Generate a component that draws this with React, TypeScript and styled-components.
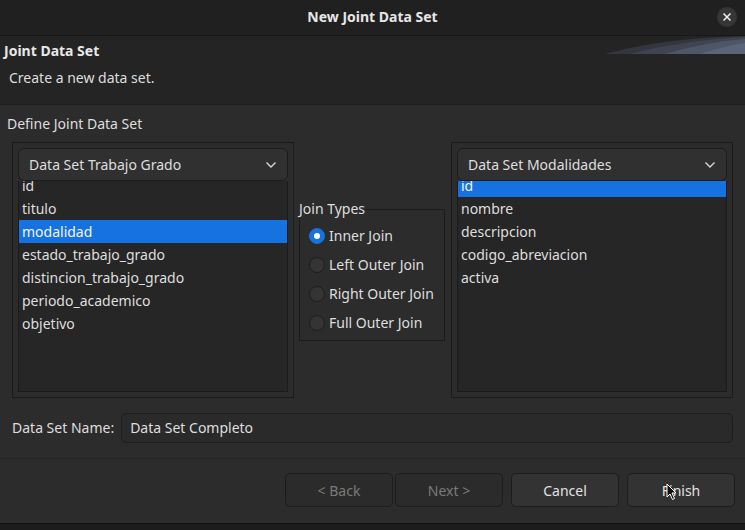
import React from 'react';
import styled, { createGlobalStyle } from 'styled-components';

const Global = createGlobalStyle`
  html, body { margin: 0; padding: 0; background: #2c2c2c; }
  body { font-family: "Noto Sans", "Open Sans", sans-serif; color: #dedede; font-size: 14px; }
  * { box-sizing: border-box; }
`;

const Window = styled.div`
  width: 745px;
  height: 530px;
  display: flex;
  flex-direction: column;
  background: #2c2c2c;
  overflow: hidden;
  position: relative;
`;

const TitleBar = styled.div`
  height: 36px;
  flex: none;
  background: #202020;
  border-bottom: 1px solid #171717;
  display: grid;
  grid-template-columns: 1fr auto 1fr;
  align-items: center;
  padding-bottom: 2px;
`;

const Title = styled.div`
  font-weight: 700;
  font-size: 14px;
  color: #e6e6e6;
`;

const CloseButton = styled.div`
  justify-self: end;
  margin-right: 8px;
  width: 20px;
  height: 20px;
  border-radius: 50%;
  background: #363636;
  display: flex;
  align-items: center;
  justify-content: center;
`;

const Header = styled.div`
  height: 69px;
  flex: none;
  background: #242424;
  border-bottom: 1px solid #1e1e1e;
  display: flex;
  justify-content: space-between;
`;

const HeaderText = styled.div`
  display: flex;
  flex-direction: column;
  padding: 5px 0 0 4px;
`;

const HeaderTitle = styled.div`
  font-weight: 700;
  font-size: 14px;
  line-height: 20px;
  color: #e8e8e8;
`;

const HeaderSub = styled.div`
  margin-top: 7px;
  padding-left: 5px;
  line-height: 20px;
`;

const Banner = styled.svg`
  width: 140px;
  height: 18px;
  display: block;
`;

const Content = styled.div`
  height: 353px;
  flex: none;
  display: flex;
  flex-direction: column;
`;

const SectionLabel = styled.div`
  padding: 9px 0 0 7px;
  line-height: 20px;
`;

const GroupsRow = styled.div`
  margin: 8px 0 0 12px;
  display: grid;
  grid-template-columns: 282px 157px 282px;
  height: 256px;
`;

const DataGroup = styled.div`
  border: 1px solid #1b1b1b;
  padding: 5px;
  display: flex;
  flex-direction: column;
`;

const Combo = styled.div`
  height: 33px;
  flex: none;
  border: 1px solid #1c1c1c;
  border-radius: 6px;
  background: #303030;
  display: flex;
  align-items: center;
  justify-content: space-between;
  padding: 0 10px 0 10px;
  position: relative;
  z-index: 1;
`;

const ListBox = styled.div`
  flex: 1;
  border: 1px solid #1b1b1b;
  border-top: none;
  background: #262626;
  overflow: hidden;
`;

const ListInner = styled.div`
  margin-top: -7px;
  display: flex;
  flex-direction: column;
`;

const Row = styled.div<{ $selected?: boolean }>`
  height: 23px;
  line-height: 23px;
  padding-left: 3px;
  background: ${(p) => (p.$selected ? '#1672e1' : 'transparent')};
  color: ${(p) => (p.$selected ? '#f4f4f4' : '#dedede')};
`;

const Middle = styled.div`
  display: flex;
  flex-direction: column;
  padding: 0 6px 0 5px;
`;

const JoinFieldset = styled.fieldset`
  margin: 59px 0 0 0;
  border: 1px solid #1b1b1b;
  padding: 4px 0 3px 9px;
  min-width: 0;
`;

const Legend = styled.legend`
  padding: 0;
  margin-left: -10px;
  line-height: 16px;
`;

const RadioRow = styled.div`
  height: 29px;
  display: flex;
  align-items: center;
  gap: 4px;
`;

const RadioCircle = styled.div<{ $checked?: boolean }>`
  width: 16px;
  height: 16px;
  border-radius: 50%;
  border: 1px solid ${(p) => (p.$checked ? '#1672e1' : '#1e1e1e')};
  background: ${(p) => (p.$checked ? '#1672e1' : '#343434')};
  display: flex;
  align-items: center;
  justify-content: center;
  &::after {
    content: '';
    width: 6px;
    height: 6px;
    border-radius: 50%;
    background: #ffffff;
    display: ${(p) => (p.$checked ? 'block' : 'none')};
  }
`;

const NameRow = styled.div`
  margin-top: 15px;
  display: flex;
  align-items: center;
  padding: 0 12px 0 12px;
  gap: 7px;
`;

const NameInput = styled.div`
  flex: 1;
  height: 30px;
  border: 1px solid #1d1d1d;
  border-radius: 5px;
  background: #2a2a2a;
  display: flex;
  align-items: center;
  padding: 0 0 2px 8px;
`;

const NameLabel = styled.span`
  padding-bottom: 2px;
`;

const ButtonBar = styled.div`
  height: 65px;
  flex: none;
  border-top: 1px solid #262626;
  display: flex;
  justify-content: flex-end;
  align-items: flex-start;
  padding: 14px 10px 0 0;
  gap: 8px;
`;

const NavPair = styled.div`
  display: flex;
  gap: 2px;
`;

const Button = styled.div<{ $disabled?: boolean }>`
  width: 108px;
  height: 34px;
  border-radius: 5px;
  border: 1px solid #1d1d1d;
  background: ${(p) => (p.$disabled ? '#2b2b2b' : '#333333')};
  color: ${(p) => (p.$disabled ? '#7a7a7a' : '#e2e2e2')};
  display: flex;
  align-items: center;
  justify-content: center;
  position: relative;
`;

const Cursor = styled.svg`
  position: absolute;
  left: 38px;
  top: 9px;
  width: 12px;
  height: 18px;
`;

const BottomStrip = styled.div`
  flex: 1;
  background: #1c1c1c;
  border-top: 1px solid #111;
`;

const Chevron = () => (
  <svg width="12" height="8" viewBox="0 0 12 8">
    <path d="M1.5 1.5 L6 6 L10.5 1.5" stroke="#d8d8d8" strokeWidth="1.4" fill="none" />
  </svg>
);

const DataSetPanel = ({ name, fields, selected }: { name: string; fields: string[]; selected: number }) => (
  <DataGroup>
    <Combo>
      <span>{name}</span>
      <Chevron />
    </Combo>
    <ListBox>
      <ListInner>
        {fields.map((f, i) => (
          <Row key={f} $selected={i === selected}>{f}</Row>
        ))}
      </ListInner>
    </ListBox>
  </DataGroup>
);

export default function App() {
  const joins = ['Inner Join', 'Left Outer Join', 'Right Outer Join', 'Full Outer Join'];
  return (
    <Window>
      <Global />
      <TitleBar>
        <span />
        <Title>New Joint Data Set</Title>
        <CloseButton>
          <svg width="10" height="10" viewBox="0 0 10 10">
            <path d="M1.5 1.5 L8.5 8.5 M8.5 1.5 L1.5 8.5" stroke="#f0f0f0" strokeWidth="1.5" />
          </svg>
        </CloseButton>
      </TitleBar>
      <Header>
        <HeaderText>
          <HeaderTitle>Joint Data Set</HeaderTitle>
          <HeaderSub>Create a new data set.</HeaderSub>
        </HeaderText>
        <Banner viewBox="0 0 140 18">
          <path d="M0 18 C30 10 70 2 140 0 L140 18 Z" fill="#33363c" />
          <path d="M25 18 C50 11 90 4 140 1 L140 18 Z" fill="#3f4450" />
          <path d="M60 18 C80 12 105 6 140 3 L140 18 Z" fill="#4e5669" />
          <path d="M95 18 C110 13 125 9 140 7 L140 18 Z" fill="#5b6579" />
        </Banner>
      </Header>
      <Content>
        <SectionLabel>Define Joint Data Set</SectionLabel>
        <GroupsRow>
          <DataSetPanel
            name="Data Set Trabajo Grado"
            fields={['id', 'titulo', 'modalidad', 'estado_trabajo_grado', 'distincion_trabajo_grado', 'periodo_academico', 'objetivo']}
            selected={2}
          />
          <Middle>
            <JoinFieldset>
              <Legend>Join Types</Legend>
              {joins.map((j, i) => (
                <RadioRow key={j}>
                  <RadioCircle $checked={i === 0} />
                  <span>{j}</span>
                </RadioRow>
              ))}
            </JoinFieldset>
          </Middle>
          <DataSetPanel
            name="Data Set Modalidades"
            fields={['id', 'nombre', 'descripcion', 'codigo_abreviacion', 'activa']}
            selected={0}
          />
        </GroupsRow>
        <NameRow>
          <NameLabel>Data Set Name:</NameLabel>
          <NameInput>Data Set Completo</NameInput>
        </NameRow>
      </Content>
      <ButtonBar>
        <NavPair>
          <Button $disabled>&lt; Back</Button>
          <Button $disabled>Next &gt;</Button>
        </NavPair>
        <Button>Cancel</Button>
        <Button>
          Finish
          <Cursor viewBox="0 0 12 18">
            <path d="M1 1 L1 14 L4 11 L6.5 16.5 L8.5 15.5 L6 10 L10 10 Z" fill="#111" stroke="#fff" strokeWidth="1" />
          </Cursor>
        </Button>
      </ButtonBar>
      <BottomStrip />
    </Window>
  );
}
